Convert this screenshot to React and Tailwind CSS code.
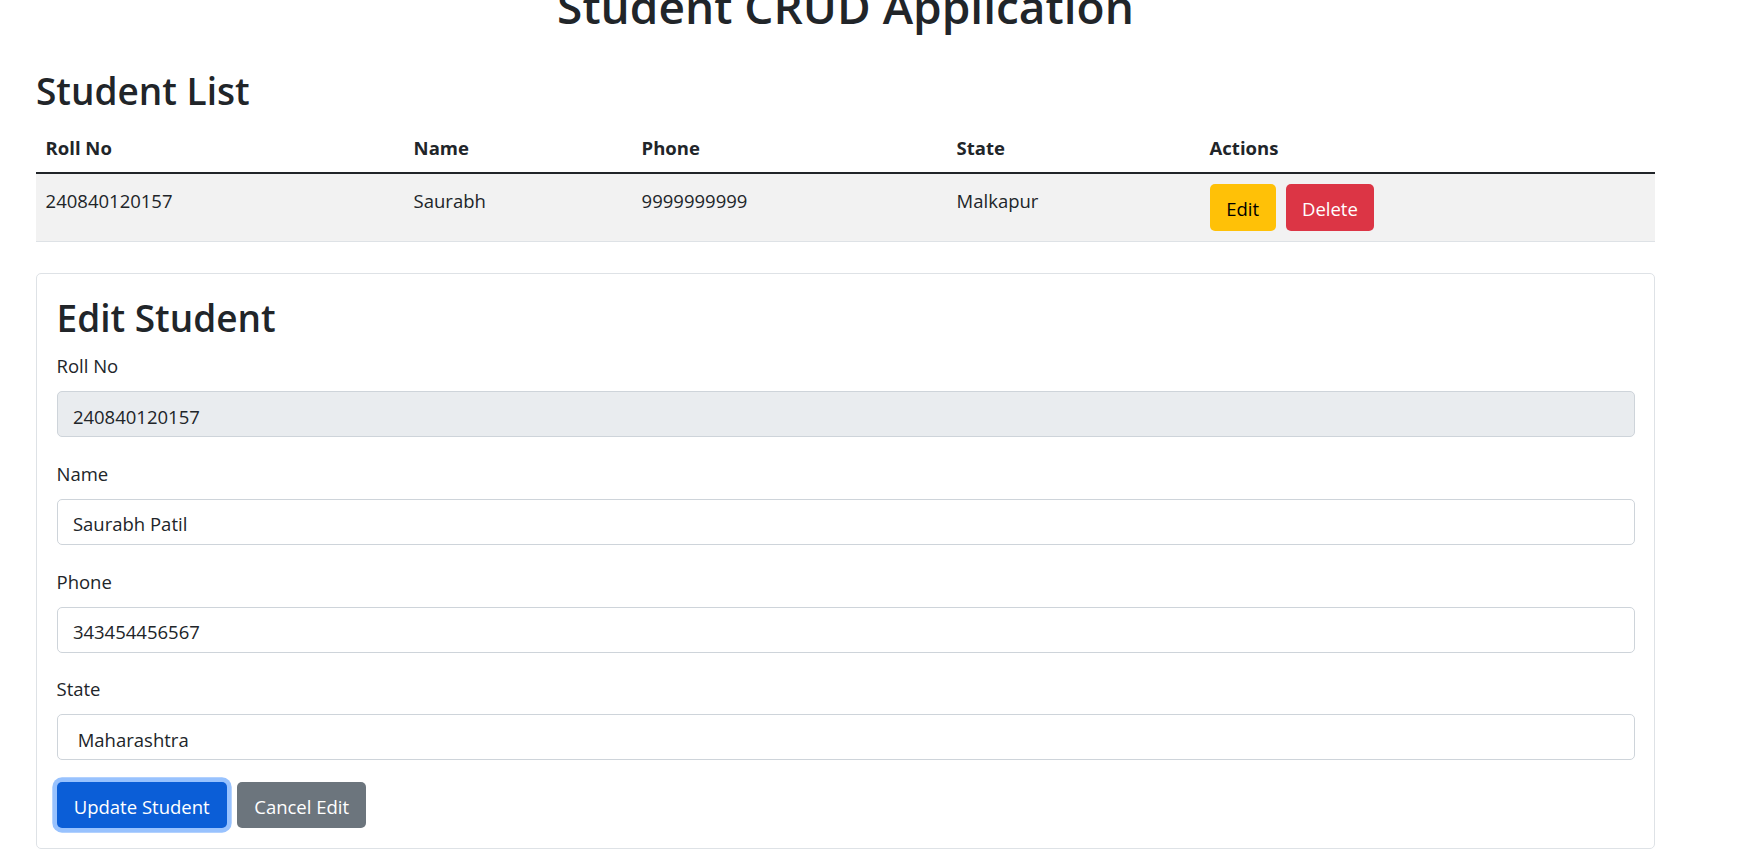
import React from 'react'

const students = [
  { roll: '240840120157', name: 'Saurabh', phone: '9999999999', state: 'Malkapur' },
]

const cols = 'grid grid-cols-[368px_228px_315px_253px_1fr]'

function Field({ label, value, disabled, last }){
  return (
    <div className={last ? 'mb-[21.5px]' : 'mb-[22.7px]'}>
      <label className="block leading-[28.8px] mb-[10.2px]">{label}</label>
      <input
        defaultValue={value}
        disabled={disabled}
        className={`block w-full h-[46px] pt-[4px] px-[15.4px] border border-[#ced4da] rounded-[5px] text-[18.5px] text-[#212529] outline-none ${disabled ? 'bg-[#e9ecef]' : 'bg-white'}`}
      />
    </div>
  )
}

export default function App(){
  return (
    <div className="min-h-screen bg-white text-[#212529] text-[18.5px] font-['Open_Sans','Noto_Sans',sans-serif]">
      <div className="ml-[36px] w-[1619px]">
        <h1 className="-mt-[22px] mb-[34.5px] text-center text-[46px] leading-[56px] font-semibold">Student CRUD Application</h1>

        <h2 className="mb-[11.5px] text-[37px] leading-[44px] font-semibold">Student List</h2>

        {/* table */}
        <div>
          <div className={`${cols} border-b-2 border-[#212529] font-bold`}>
            {['Roll No', 'Name', 'Phone', 'State', 'Actions'].map(h => (
              <div key={h} className="px-[9.6px] py-[9.6px] leading-[28.8px]">{h}</div>
            ))}
          </div>
          {students.map(s => (
            <div key={s.roll} className={`${cols} bg-[#f2f2f2] border-b border-[#dee2e6]`}>
              <div className="px-[9.6px] pt-[13.4px] leading-[28.8px]">{s.roll}</div>
              <div className="px-[9.6px] pt-[13.4px] leading-[28.8px]">{s.name}</div>
              <div className="px-[9.6px] pt-[13.4px] leading-[28.8px]">{s.phone}</div>
              <div className="px-[9.6px] pt-[13.4px] leading-[28.8px]">{s.state}</div>
              <div className="px-[9.6px] py-[10px] flex gap-[10px]">
                <button className="w-[66px] h-[46.7px] pt-[4px] rounded-[5px] bg-[#ffc107] text-black leading-[28.8px]">Edit</button>
                <button className="w-[88.7px] h-[46.7px] pt-[4px] rounded-[5px] bg-[#dc3545] text-white leading-[28.8px]">Delete</button>
              </div>
            </div>
          ))}
        </div>

        {/* edit card */}
        <div className="mt-[31px] border border-[#dee2e6] rounded-[5px] p-[19.5px] pb-[20px]">
          <h2 className="mt-[3px] mb-[12px] text-[37px] leading-[44px] font-semibold">Edit Student</h2>
          <Field label="Roll No" value="240840120157" disabled />
          <Field label="Name" value="Saurabh Patil" />
          <Field label="Phone" value="343454456567" />
          <Field label="State" value=" Maharashtra" last />
          <div className="flex gap-[10.6px]">
            <button className="w-[170.4px] h-[46.7px] pt-[4px] rounded-[5px] bg-[#0b5ed7] text-white leading-[28.8px] ring-[4.7px] ring-[#98c2fe]">Update Student</button>
            <button className="w-[128.4px] h-[46.7px] pt-[4px] rounded-[5px] bg-[#6c757d] text-white leading-[28.8px]">Cancel Edit</button>
          </div>
        </div>
      </div>
    </div>
  )
}
